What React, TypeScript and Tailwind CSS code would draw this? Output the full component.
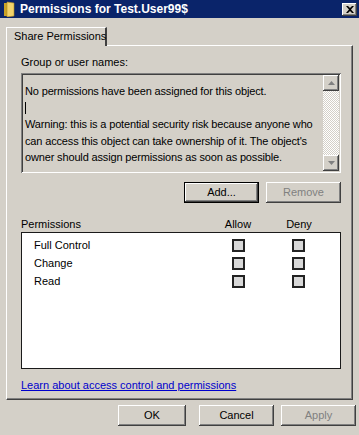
import React from "react";

const raised =
  "shadow-[inset_-1px_-1px_#404040,inset_1px_1px_#ffffff,inset_-2px_-2px_#808080,inset_2px_2px_#d4d0c8]";
const sunken =
  "shadow-[inset_1px_1px_#808080,inset_-1px_-1px_#ffffff,inset_2px_2px_#404040,inset_-2px_-2px_#d4d0c8]";

const rows = ["Full Control", "Change", "Read"];

export default function App() {
  return (
    <div
      className="w-[359px] h-[435px] bg-[#d4d0c8] flex flex-col text-[11px] text-black overflow-hidden"
      style={{ fontFamily: '"Liberation Sans", Arial, sans-serif' }}
    >
      {/* title bar */}
      <div className="h-[18px] bg-[#0a246a] flex items-center pl-[3px] pr-[2px]">
        <FolderIcon />
        <span className="ml-[5px] text-white font-bold text-[12px] leading-none whitespace-nowrap">Permissions for Test.User99$</span>
        <div className={`ml-auto w-[15px] h-[13px] bg-[#d4d0c8] flex items-center justify-center ${raised}`}>
          <svg width="8" height="7" viewBox="0 0 8 7">
            <path d="M0 0h2l2 2 2-2h2L5 3.5 8 7H6L4 5 2 7H0l3-3.5z" fill="#000" />
          </svg>
        </div>
      </div>

      {/* tab + panel */}
      <div className="pl-[6px] pr-[6px] pt-[9px]">
        <div className="flex">
          <div className="relative h-[19px] w-[101px] border-t border-l border-white border-r-2 border-r-[#404040] flex items-center pl-[7px] z-10 bg-[#d4d0c8] mb-[-1px] pb-[1px] whitespace-nowrap">
            Share Permissions
          </div>
        </div>
        <div className="h-[355px] border-t border-l border-white border-r border-r-[#404040] border-b border-b-[#404040] shadow-[inset_-1px_-1px_#808080] pl-[14px] pr-[12px] pt-[10px] flex flex-col">
          <div className="leading-[13px] mb-[4px]">Group or user names:</div>
          <div className={`h-[100px] w-[320px] bg-[#d4d0c8] flex p-[2px] ${sunken}`}>
            <div className="flex-1 pl-[2px] pt-[8px] leading-[16.5px] tracking-[-0.15px]">
              <div>No permissions have been assigned for this object.</div>
              <div className="h-[16.5px] flex items-center">
                <div className="w-px h-[12px] bg-black" />
              </div>
              <div>
                Warning: this is a potential security risk because anyone who can access this object can take ownership of it. The object&apos;s owner should assign permissions as soon as possible.
              </div>
            </div>
            <div className="w-[16px] flex flex-col bg-[repeating-conic-gradient(#ffffff_0%_25%,#d4d0c8_0%_50%)] bg-[length:2px_2px]">
              <ScrollArrow up />
              <div className="flex-1" />
              <ScrollArrow />
            </div>
          </div>

          <div className="flex justify-end gap-[7px] w-[320px] mt-[9px]">
            <button className={`w-[75px] h-[21px] bg-[#d4d0c8] border border-black ${raised}`}>Add...</button>
            <button className={`w-[75px] h-[21px] bg-[#d4d0c8] text-[#808080] ${raised}`}>Remove</button>
          </div>

          <div className="flex w-[320px] mt-[14px] h-[15px] items-center">
            <span className="flex-1">Permissions</span>
            <span className="w-[50px] text-center mr-[11px]">Allow</span>
            <span className="w-[50px] text-center mr-[17px]">Deny</span>
          </div>
          <div className="w-[320px] h-[137px] bg-white border border-[#1a1a1a] pt-[3px]">
            {rows.map((r) => (
              <div key={r} className="flex items-center h-[18px]">
                <span className="flex-1 pl-[12px]">{r}</span>
                <Check />
                <div className="w-[47px]" />
                <Check />
                <div className="w-[35px]" />
              </div>
            ))}
          </div>

          <a className="mt-[10px] text-[#0000cc] underline leading-[13px]">Learn about access control and permissions</a>
        </div>
      </div>

      {/* dialog buttons */}
      <div className="flex mt-[5px] pl-[118px]">
        <button className={`w-[68px] h-[21px] bg-[#d4d0c8] ${raised}`}>OK</button>
        <button className={`ml-[13px] w-[75px] h-[21px] bg-[#d4d0c8] ${raised}`}>Cancel</button>
        <button className={`ml-[7px] w-[75px] h-[21px] bg-[#d4d0c8] text-[#808080] ${raised}`}>Apply</button>
      </div>
    </div>
  );
}

function Check() {
  return <div className="w-[13px] h-[13px] border-2 border-[#222] bg-[#d8d8d8]" />;
}

function ScrollArrow({ up }: { up?: boolean }) {
  return (
    <div className={`w-[16px] h-[16px] bg-[#d4d0c8] flex items-center justify-center ${raised}`}>
      <svg width="7" height="4" viewBox="0 0 7 4">
        <path d={up ? "M3.5 0L7 4H0z" : "M0 0h7L3.5 4z"} fill="#808080" />
      </svg>
    </div>
  );
}

function FolderIcon() {
  return (
    <svg width="12" height="16" viewBox="0 0 12 16">
      <path d="M1 2h4l1 1v12H1z" fill="#c9a227" />
      <path d="M4 1l7 1v13l-7 1z" fill="#f3d36b" />
      <path d="M4 1l7 1v13l-7 1z" fill="none" stroke="#b08a1c" strokeWidth="0.6" />
    </svg>
  );
}
